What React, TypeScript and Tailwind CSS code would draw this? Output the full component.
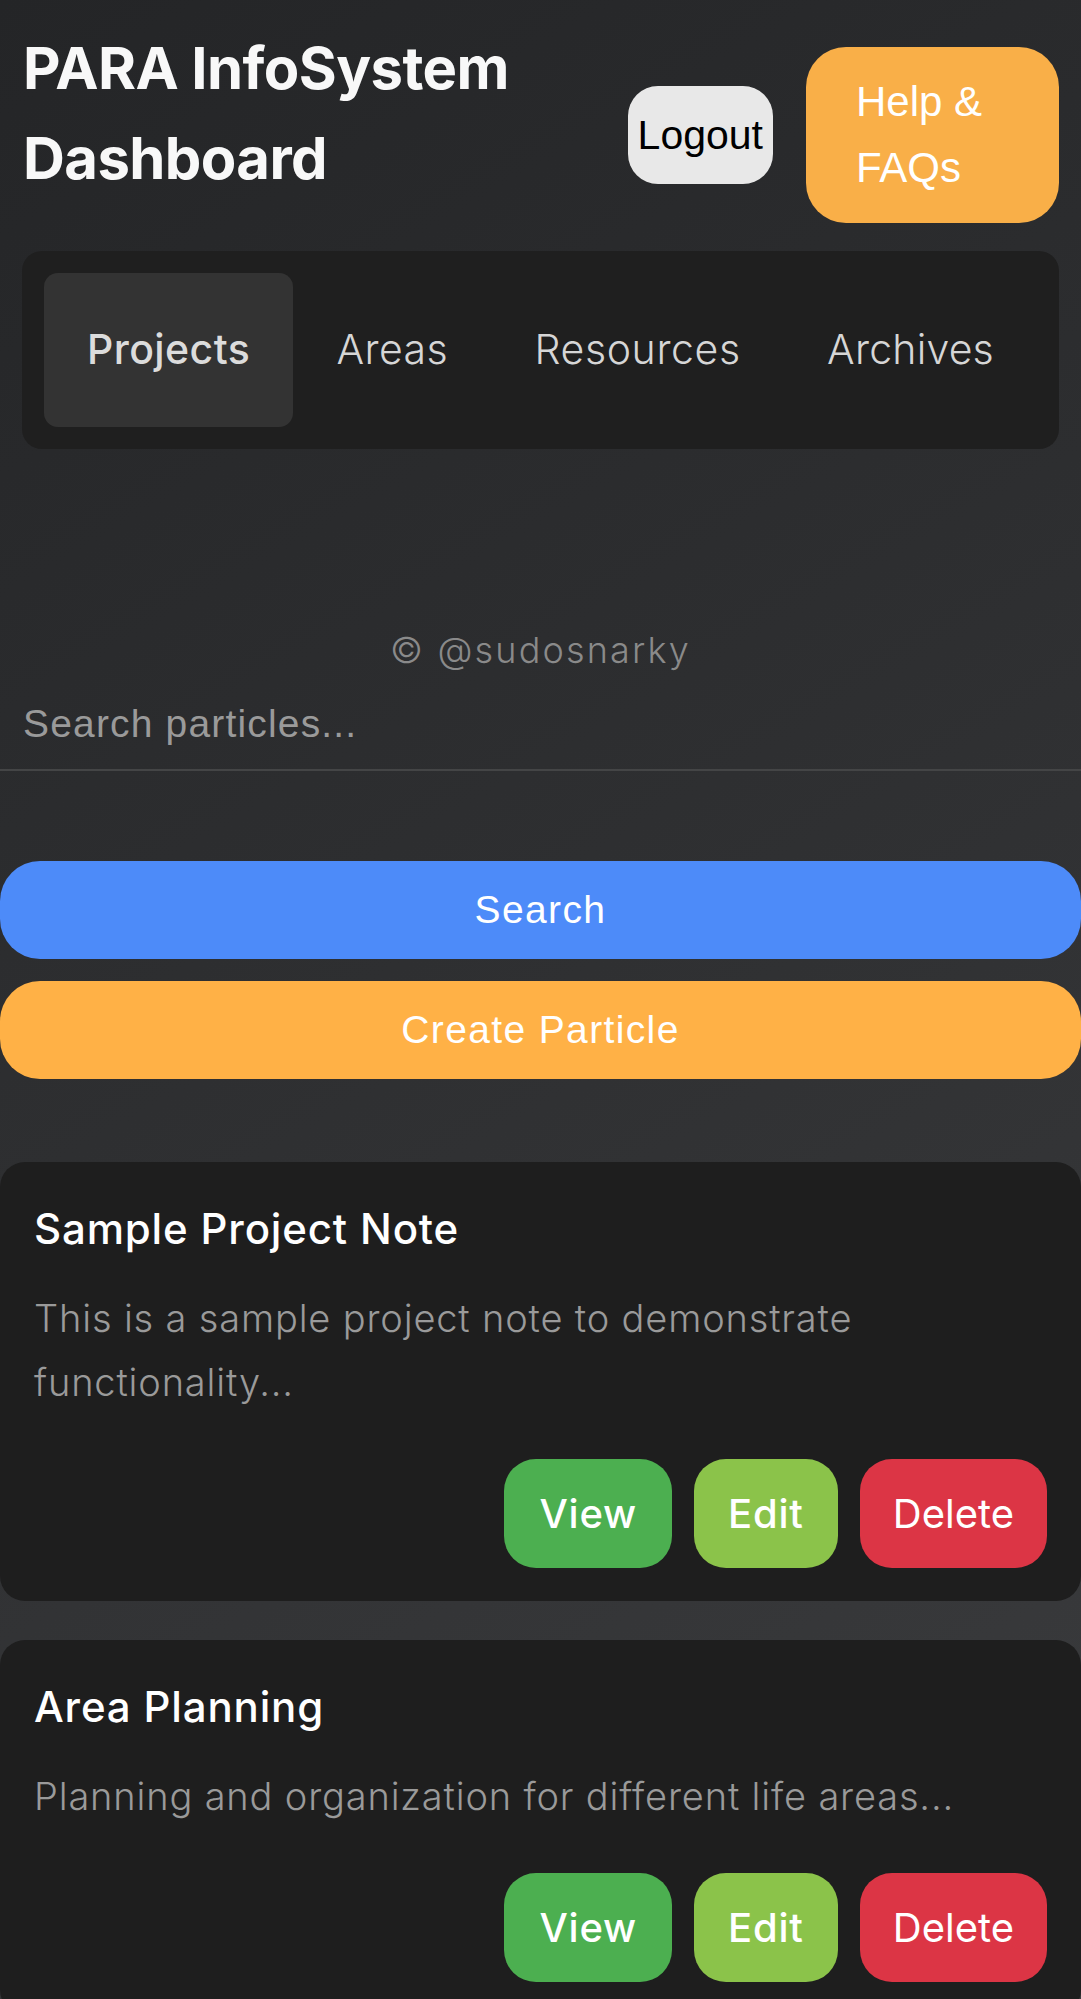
import React from "react";

const inter = "font-['Inter',sans-serif]";
const arial = "font-['Liberation_Sans',Arial,sans-serif]";

function Card({ title, desc }: { title: string; desc: string }) {
  return (
    <div className="rounded-[25px] bg-[#1e1e1e] px-[34px] pt-[42px] pb-[33px]">
      <h3 className={`${inter} text-[42px] leading-[50px] font-medium tracking-[0.02em] text-white`}>{title}</h3>
      <p className={`${inter} mt-[32px] text-[38px] leading-[64px] font-light tracking-[0.022em] text-[#9a9a9a]`}>{desc}</p>
      <div className="mt-[45px] flex justify-end gap-[22px]">
        <button className={`${inter} h-[109px] rounded-[32px] bg-[#4caf50] px-[35px] text-[40px] font-medium tracking-[0.02em] text-white`}>View</button>
        <button className={`${inter} h-[109px] rounded-[32px] bg-[#8bc34a] px-[34px] text-[40px] font-medium tracking-[0.02em] text-white`}>Edit</button>
        <button className={`${inter} h-[109px] rounded-[32px] bg-[#dc3545] px-[33px] text-[40px] font-normal text-white`}>Delete</button>
      </div>
    </div>
  );
}

export default function App() {
  return (
    <div className="min-h-screen w-full bg-[linear-gradient(150deg,#242527_0%,#2e2f31_45%,#3b3c3e_100%)] pb-[20px]">
      <header className="flex items-start justify-between pl-[23px] pr-[22px]">
        <h1 className={`${inter} mt-[23px] text-[58px] leading-[90px] font-bold tracking-[-0.01em] text-[#f8f8f8]`}>
          PARA InfoSystem
          <br />
          Dashboard
        </h1>
        <div className="mt-[47px] flex items-center gap-[33px]">
          <button className={`${arial} rounded-[30px] bg-[#e8e8e8] px-[10px] py-[25px] text-[41px] leading-[48px] text-black`}>
            Logout
          </button>
          <button className={`${arial} w-[253px] rounded-[40px] bg-[#f9af48] px-[50px] py-[22px] text-left text-[42px] leading-[66px] text-white`}>
            Help &amp; FAQs
          </button>
        </div>
      </header>

      <nav className="mx-[22px] mt-[28px] flex justify-between rounded-[20px] bg-[#1f1f1f] p-[22px]">
        <div className={`${inter} flex h-[154px] items-center rounded-[14px] bg-[#333333] px-[43px] text-[41px] font-medium tracking-[0.01em] text-[#dcdcdc]`}>Projects</div>
        <div className={`${inter} flex h-[154px] items-center px-[43px] text-[41px] font-light tracking-[0.01em] text-[#d6d6d6]`}>Areas</div>
        <div className={`${inter} flex h-[154px] items-center px-[43px] text-[41px] font-light tracking-[0.015em] text-[#d6d6d6]`}>Resources</div>
        <div className={`${inter} flex h-[154px] items-center px-[43px] text-[41px] font-light tracking-[0.005em] text-[#d6d6d6]`}>Archives</div>
      </nav>

      <p className={`${inter} mt-[179px] text-center text-[36px] leading-[44px] font-light tracking-[0.06em] text-[#8a8a8a]`}>
        © @sudosnarky
      </p>

      <input
        type="text"
        placeholder="Search particles..."
        className={`${arial} mt-[7px] block h-[92px] w-full border-b-2 border-[#444546] bg-transparent px-[23px] text-[39px] tracking-[0.03em] text-white outline-none placeholder:text-[#9a9a9a]`}
      />

      <button className={`${arial} mt-[90px] flex h-[98px] w-full items-center justify-center rounded-[40px] bg-[#4d8bf9] text-[39px] tracking-[0.035em] text-white`}>
        Search
      </button>
      <button className={`${arial} mt-[22px] flex h-[98px] w-full items-center justify-center rounded-[40px] bg-[#ffb146] text-[39px] tracking-[0.035em] text-white`}>
        Create Particle
      </button>

      <div className="mt-[83px] flex flex-col gap-[39px]">
        <Card title="Sample Project Note" desc="This is a sample project note to demonstrate functionality..." />
        <Card title="Area Planning" desc="Planning and organization for different life areas..." />
      </div>
    </div>
  );
}
